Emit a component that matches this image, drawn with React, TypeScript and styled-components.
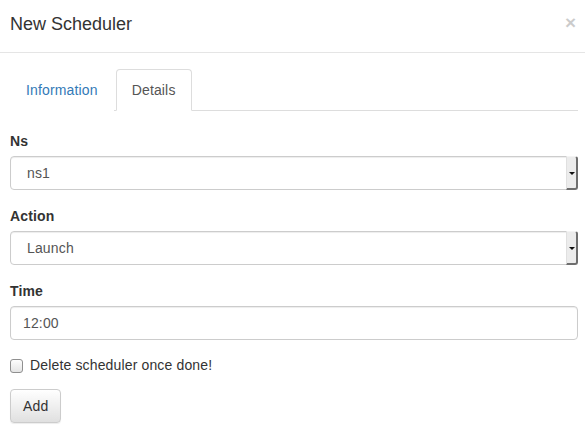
import React from "react";
import styled, { createGlobalStyle } from "styled-components";

const Global = createGlobalStyle`
  html, body { margin: 0; padding: 0; background: #fff; }
  body {
    font-family: "Liberation Sans", Arial, Helvetica, sans-serif;
    font-size: 14px;
    line-height: 20px;
    color: #333;
  }
  * { box-sizing: border-box; }
`;

const Modal = styled.div`
  width: 585px;
  height: 431px;
  background: #fff;
  overflow: hidden;
`;

const Header = styled.div`
  display: flex;
  align-items: flex-start;
  justify-content: space-between;
  padding: 11px 9px 15px 10px;
  border-bottom: 1px solid #e5e5e5;
`;

const Title = styled.h4`
  margin: 0;
  font-size: 18px;
  font-weight: normal;
  line-height: 26px;
  color: #333;
`;

const Close = styled.button`
  border: 0;
  background: transparent;
  padding: 0;
  margin-top: -1px;
  font-family: "Liberation Sans", Arial, sans-serif;
  font-size: 19px;
  font-weight: bold;
  line-height: 26px;
  color: #000;
  opacity: 0.2;
  cursor: pointer;
`;

const Body = styled.div`
  padding: 16px 7px 0 10px;
  letter-spacing: 0.15px;
`;

const Tabs = styled.ul`
  display: flex;
  margin: 0;
  padding: 0;
  list-style: none;
  border-bottom: 1px solid #ddd;
`;

const Tab = styled.li<{ $active?: boolean }>`
  margin-right: 2px;
  margin-bottom: -1px;
  padding: 10px 15px;
  line-height: 20px;
  border: 1px solid ${(p) => (p.$active ? "#ddd" : "transparent")};
  border-bottom-color: transparent;
  border-radius: 4px 4px 0 0;
  background: #fff;
  color: ${(p) => (p.$active ? "#555" : "#337ab7")};
  cursor: pointer;
`;

const Pane = styled.div`
  display: flex;
  flex-direction: column;
  gap: 16px;
  padding-top: 20px;
`;

const Group = styled.div`
  display: flex;
  flex-direction: column;
  gap: 5px;
`;

const Label = styled.label`
  font-weight: bold;
  line-height: 20px;
  color: #333;
`;

const SelectWrap = styled.div`
  position: relative;
  height: 34px;
`;

const Select = styled.select`
  appearance: none;
  -webkit-appearance: none;
  width: 100%;
  height: 34px;
  padding: 0 20px 0 16px;
  font-family: "Liberation Sans", Arial, sans-serif;
  font-size: 14px;
  letter-spacing: 0.15px;
  color: #555;
  background: #fff;
  border: 1px solid #ccc;
  border-radius: 4px;
  box-shadow: inset 0 1px 1px rgba(0, 0, 0, 0.075);
  outline: none;
`;

const DropButton = styled.span`
  position: absolute;
  top: 0;
  right: 0;
  width: 12px;
  height: 34px;
  display: flex;
  align-items: center;
  justify-content: center;
  background: #ececec;
  border-left: 1px solid #e0e0e0;
  border-right: 2px solid #6e6e6e;
  border-bottom: 2px solid #6e6e6e;
  border-top: 1px solid #f4f4f4;
  border-radius: 0 3px 3px 0;
  pointer-events: none;
`;

const Arrow = styled.span`
  width: 0;
  height: 0;
  margin-top: 1px;
  border-left: 3px solid transparent;
  border-right: 3px solid transparent;
  border-top: 3px solid #111;
`;

const Input = styled.input`
  width: 100%;
  height: 34px;
  padding: 0 12px;
  font-family: "Liberation Sans", Arial, sans-serif;
  font-size: 14px;
  letter-spacing: 0.15px;
  color: #555;
  background: #fff;
  border: 1px solid #ccc;
  border-radius: 4px;
  box-shadow: inset 0 1px 1px rgba(0, 0, 0, 0.075);
  outline: none;
`;

const CheckRow = styled.label`
  display: flex;
  align-items: center;
  gap: 7px;
  height: 20px;
  margin-top: -1px;
  color: #333;
  cursor: pointer;
`;

const Check = styled.input`
  appearance: none;
  -webkit-appearance: none;
  margin: 1px 0 0 0;
  width: 13px;
  height: 14px;
  border: 1px solid #8f8f8f;
  border-radius: 3px;
  background: linear-gradient(#fdfdfd, #e4e4e4);
`;

const Button = styled.button`
  align-self: flex-start;
  height: 34px;
  margin-top: -2px;
  padding: 0 12px;
  font-family: "Liberation Sans", Arial, sans-serif;
  font-size: 14px;
  letter-spacing: 0.15px;
  color: #333;
  background: linear-gradient(#fff, #e0e0e0);
  border: 1px solid #ccc;
  border-radius: 4px;
  box-shadow: inset 0 1px 0 rgba(255, 255, 255, 0.15), 0 1px 1px rgba(0, 0, 0, 0.075);
  cursor: pointer;
`;

function SelectField({ label, value }: { label: string; value: string }) {
  return (
    <Group>
      <Label>{label}</Label>
      <SelectWrap>
        <Select defaultValue={value}>
          <option>{value}</option>
        </Select>
        <DropButton>
          <Arrow />
        </DropButton>
      </SelectWrap>
    </Group>
  );
}

export default function App() {
  return (
    <>
      <Global />
      <Modal>
        <Header>
          <Title>New Scheduler</Title>
          <Close>×</Close>
        </Header>
        <Body>
          <Tabs>
            <Tab>Information</Tab>
            <Tab $active>Details</Tab>
          </Tabs>
          <Pane>
            <SelectField label="Ns" value="ns1" />
            <SelectField label="Action" value="Launch" />
            <Group>
              <Label>Time</Label>
              <Input defaultValue="12:00" />
            </Group>
            <CheckRow>
              <Check type="checkbox" />
              Delete scheduler once done!
            </CheckRow>
            <Button>Add</Button>
          </Pane>
        </Body>
      </Modal>
    </>
  );
}
